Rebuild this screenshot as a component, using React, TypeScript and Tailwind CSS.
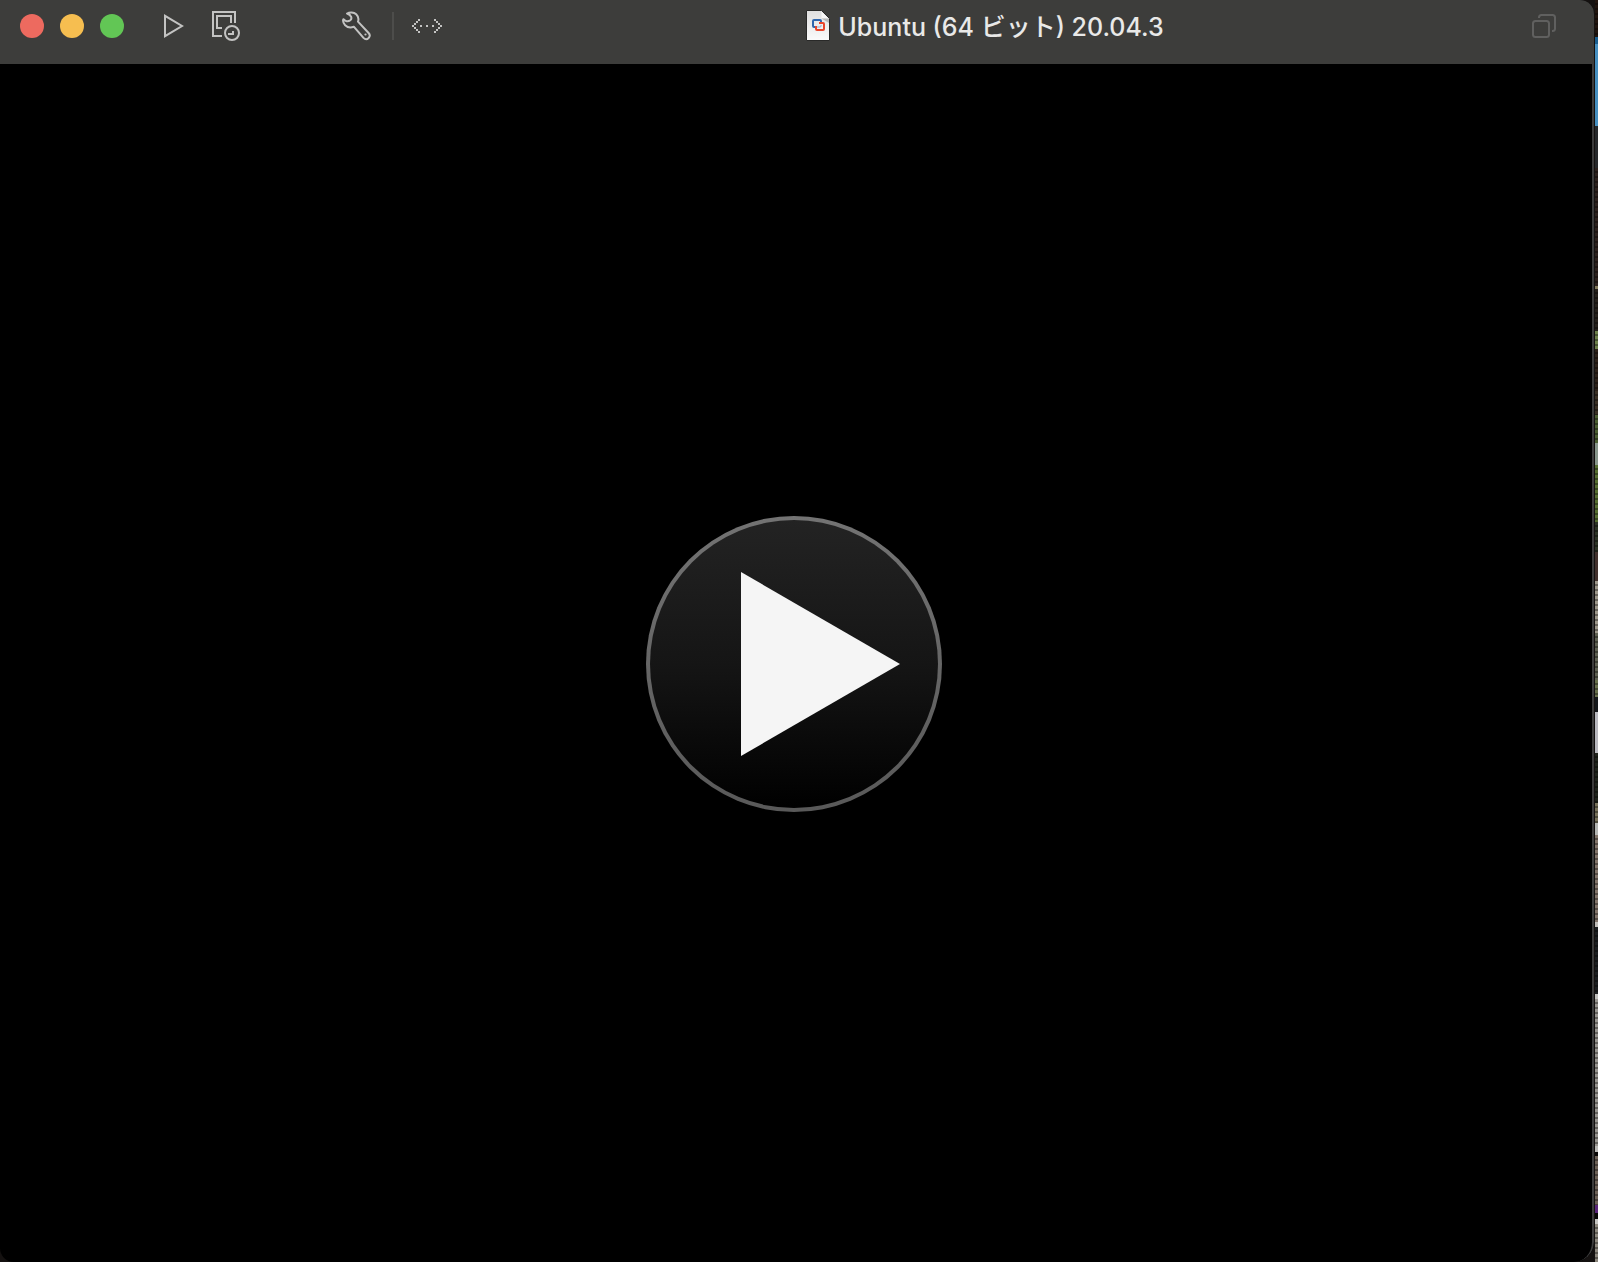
import type { ReactNode } from 'react';

type Band = [size: number, color: string, grain?: boolean];

const wallpaper: Band[] = [
  [37, '#21150f', true],
  [7, '#1b5f90'],
  [82, '#468fc0'],
  [42, '#26282a'],
  [118, '#2c211d', true],
  [3, '#827a5c'],
  [42, '#25201b', true],
  [18, '#6c7f4a', true],
  [42, '#2c2119', true],
  [24, '#3a3025', true],
  [28, '#4b5e32', true],
  [22, '#87958b'],
  [57, '#566e31', true],
  [30, '#2d3426', true],
  [29, '#42312d'],
  [52, '#9c968a', true],
  [48, '#5e6052', true],
  [17, '#68704c', true],
  [15, '#14171a'],
  [41, '#b9b9bf'],
  [50, '#20241c', true],
  [20, '#77715a', true],
  [12, '#b3b5b3'],
  [87, '#82746a', true],
  [5, '#c0bdb9'],
  [67, '#1c1e20', true],
  [5, '#c0bfbc'],
  [147, '#97948f', true],
  [6, '#bab9b6'],
  [4, '#080706'],
  [49, '#6d6157', true],
  [8, '#5a267a'],
  [6, '#080706'],
  [5, '#c4c3c0'],
  [38, '#8c877d', true],
];

function ToolButton({ label, className, children }: { label: string; className: string; children: ReactNode }) {
  return (
    <button type="button" aria-label={label} className={`flex shrink-0 items-center justify-center text-[#c3c3c2] ${className}`}>
      {children}
    </button>
  );
}

function PlayIcon() {
  return (
    <svg width="20" height="24" viewBox="0 0 20 24" fill="none" stroke="currentColor" strokeWidth="2">
      <path d="M1 1.8V22.2L18 12Z" />
    </svg>
  );
}

function SnapshotIcon() {
  return (
    <svg width="28" height="30" viewBox="0 0 28 30" fill="none" stroke="currentColor" strokeWidth="2">
      <path d="M10 25H1V1H23V12" />
      <path d="M10 17H5V5H19V12" />
      <circle cx="20" cy="22" r="7" />
      <path d="M16 23H21V20" />
    </svg>
  );
}

function WrenchIcon() {
  return (
    <svg width="30" height="30" viewBox="0 0 30 30" fill="none" stroke="currentColor" strokeWidth="2" strokeLinejoin="round">
      <path d="M5 2.500C7.500 1 11.800 1 14.200 3.200C16.400 5.400 16.900 8 16 10.600L26.600 22C28 23.500 28 25.500 26.600 27C25.200 28.400 23 28.400 21.500 26.900L11.800 15.700C8.800 17 5.500 16.400 3.200 14.200C1.300 12.200 .7 9.800 1.400 8.200C3 10.400 6 11 8.300 9.300C10.200 7.800 9.800 4 5 2.500Z" />
      <circle cx="23.500" cy="23.500" r="1.100" fill="currentColor" stroke="none" />
    </svg>
  );
}

const dots = [
  [6, 0], [4, 2], [2, 4], [0, 6], [2, 8], [4, 10], [6, 12],
  [8, 6], [14, 6], [20, 6],
  [22, 0], [24, 2], [26, 4], [28, 6], [26, 8], [24, 10], [22, 12],
];

function ConnectionsIcon() {
  return (
    <svg width="30" height="14" viewBox="0 0 30 14" fill="currentColor">
      {dots.map(([x, y]) => (
        <rect key={`${x}-${y}`} x={x} y={y} width="2" height="2" />
      ))}
    </svg>
  );
}

function DocumentIcon() {
  return (
    <svg width="24" height="32" viewBox="0 0 24 32" fill="none" className="shrink-0">
      <defs>
        <linearGradient id="sheet" x1="0" y1="0" x2="0" y2="1">
          <stop offset="0" stopColor="#dedede" />
          <stop offset="1" stopColor="#fbfbfb" />
        </linearGradient>
      </defs>
      <path d="M.5 .5H15.5L23.5 8.500V30.500H.5Z" fill="url(#sheet)" stroke="#292928" />
      <path d="M15.500 1.500L22.500 8.500H15.500Z" fill="#f8f8f8" />
      <path d="M15.500 8.500H23V13Z" fill="#b9b9b9" />
      <path d="M9 17H8Q7 17 7 16V11Q7 10 8 10H14Q15 10 15 11V13" stroke="#2f66ad" strokeWidth="2" />
      <path d="M11 17H14Q15 17 15 16V15" stroke="#8ba3cc" strokeWidth="1" />
      <path d="M10 16V19Q10 20 11 20H17Q18 20 18 19V14Q18 13 17 13H13" stroke="#e9452b" strokeWidth="2" />
    </svg>
  );
}

function WindowsIcon() {
  return (
    <svg width="24" height="24" viewBox="0 0 24 24" fill="none" stroke="currentColor" strokeWidth="2">
      <rect x="1" y="7" width="16" height="16" rx="2.500" />
      <path d="M7 4V3.500Q7 1 9.500 1H20.500Q23 1 23 3.500V14.500Q23 17 20.500 17H20" />
    </svg>
  );
}

export default function App() {
  return (
    <div className="flex h-screen overflow-hidden bg-[#141110] font-['Inter','Noto_Sans_CJK_JP',sans-serif]">
      <main className="mr-px flex min-w-0 flex-1 flex-col overflow-hidden rounded-tr-[14px] rounded-bl-[14px] rounded-br-[20px] bg-black">
        <header className="flex h-16 shrink-0 items-center bg-[#3d3d3b] pb-3 pl-5 pr-[38px]">
          <div className="flex gap-4">
            <button type="button" aria-label="閉じる" className="size-6 rounded-full bg-[#ed6a5f]" />
            <button type="button" aria-label="最小化" className="size-6 rounded-full bg-[#f6be50]" />
            <button type="button" aria-label="最大化" className="size-6 rounded-full bg-[#62c655]" />
          </div>
          <ToolButton label="起動" className="ml-10">
            <PlayIcon />
          </ToolButton>
          <ToolButton label="スナップショット" className="ml-7">
            <SnapshotIcon />
          </ToolButton>
          <ToolButton label="設定" className="ml-[102px]">
            <WrenchIcon />
          </ToolButton>
          <div className="ml-5 h-7 w-0.5 shrink-0 bg-[#4d4d4b]" />
          <ToolButton label="接続" className="ml-[18px]">
            <ConnectionsIcon />
          </ToolButton>
          <div className="flex min-w-0 flex-1 items-center justify-center gap-2 pr-1">
            <DocumentIcon />
            <h1 className="whitespace-nowrap pt-0.5 text-[25px] font-medium leading-8 text-[#e9e9e8]">Ubuntu (64 ビット) 20.04.3</h1>
          </div>
          <button type="button" aria-label="ウインドウ" className="shrink-0 text-[#60605f]">
            <WindowsIcon />
          </button>
        </header>
        <section className="flex flex-1 items-center justify-center rounded-br-[20px] border-r-2 border-[#3b3b3b] pr-1 pt-0.5">
          <button
            type="button"
            aria-label="仮想マシンを起動"
            className="size-[296px] rounded-full bg-linear-to-b from-[#737373] to-[#595959] p-1"
          >
            <span className="flex size-full items-center justify-center rounded-full bg-linear-to-b/srgb from-[#232323] via-[#151515] to-black">
              <svg width="288" height="288" viewBox="0 0 288 288">
                <path d="M91 52V236L250 144Z" fill="#f5f5f5" />
              </svg>
            </span>
          </button>
        </section>
      </main>
      <div aria-hidden="true" className="flex w-[3px] shrink-0 flex-col">
        {wallpaper.map(([size, color, grain], i) => (
          <div
            key={i}
            className={
              grain
                ? 'min-h-0 basis-0 bg-[repeating-linear-gradient(to_bottom,transparent_0px,transparent_3px,rgba(0,0,0,0.35)_3px,rgba(0,0,0,0.35)_5px)]'
                : 'min-h-0 basis-0'
            }
            style={{ flexGrow: size, backgroundColor: color }}
          />
        ))}
      </div>
    </div>
  );
}
